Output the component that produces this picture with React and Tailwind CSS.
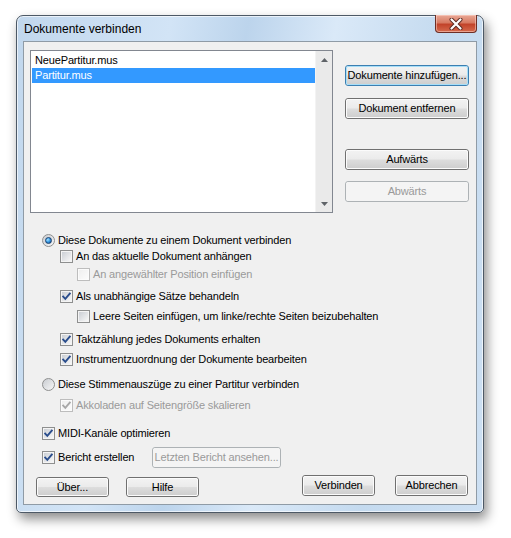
import React from "react";

const BTN = {
  normal: "border-[#707070] text-black",
  focused: "border-[#3c7fb1] text-black",
  disabled: "border-[#adb2b5] text-[#9a9a9a]",
};

const BTN_INNER = {
  normal:
    "border-[#fbfbfb] bg-[linear-gradient(#f2f2f2_0%,#ebebeb_48%,#dddddd_52%,#cfcfcf_100%)]",
  focused:
    "border-[#a6def8] bg-[linear-gradient(#f2f2f2_0%,#ebebeb_48%,#dddddd_52%,#cfcfcf_100%)]",
  disabled: "border-[#f4f4f4] bg-[#f4f4f4]",
};

function Button({ children, variant = "normal", className = "" }) {
  return (
    <div className={`flex rounded-[3px] border ${BTN[variant]} ${className}`}>
      <span
        className={`flex-1 flex items-center justify-center rounded-[2px] border text-[11px] tracking-[-0.15px] whitespace-nowrap ${BTN_INNER[variant]}`}
      >
        {children}
      </span>
    </div>
  );
}

function Check({ checked, disabled }) {
  return (
    <span
      className={`relative block w-[13px] h-[13px] shrink-0 border p-[1px] ${
        disabled ? "border-[#bdbdbd] bg-[#fbfbfb]" : "border-[#8e8f8f] bg-[#f4f4f4]"
      }`}
    >
      <span
        className={`block w-full h-full ${
          disabled
            ? "bg-[linear-gradient(135deg,#efefef,#fbfbfb)]"
            : "bg-[linear-gradient(135deg,#cbcfd5,#f7f7f7)]"
        }`}
      />
      {checked && (
        <svg className="absolute left-0 top-0" width="11" height="11" viewBox="0 0 11 11">
          <path
            d="M2.2 5.6 L4.3 7.9 L8.8 2.6"
            fill="none"
            stroke={disabled ? "#a8a8a8" : "#2a4d8c"}
            strokeWidth="1.9"
            strokeLinecap="square"
          />
        </svg>
      )}
    </span>
  );
}

function Radio({ checked }) {
  return (
    <span className="flex items-center justify-center w-[13px] h-[13px] shrink-0 rounded-full border border-[#8e8f8f] bg-[linear-gradient(135deg,#c9ccd1,#f7f7f7)]">
      {checked && (
        <span className="block w-[7px] h-[7px] rounded-full bg-[radial-gradient(circle_at_35%_35%,#a9e2ff_0%,#3b9ee6_45%,#0b3e86_100%)] border border-[#173f6e]" />
      )}
    </span>
  );
}

function Row({ indent, control, label, disabled, className = "" }) {
  return (
    <div className={`flex items-center h-[16px] ${indent} ${className}`}>
      {control}
      <span
        className={`ml-[3px] text-[11px] tracking-[-0.15px] whitespace-nowrap ${
          disabled ? "text-[#9a9a9a]" : "text-black"
        }`}
      >
        {label}
      </span>
    </div>
  );
}

function Arrow({ up }) {
  return (
    <div className="h-[17px] flex items-center justify-center">
      <svg width="7" height="4" viewBox="0 0 7 4">
        <path d={up ? "M0 4 L3.5 0 L7 4 Z" : "M0 0 L3.5 4 L7 0 Z"} fill="#5f6368" />
      </svg>
    </div>
  );
}

export default function App() {
  return (
    <div className="w-[511px] h-[538px] bg-white pt-[15px] pl-[16px] overflow-hidden font-['Liberation_Sans',Arial,sans-serif]">
      <div className="w-[468px] h-[498px] flex flex-col rounded-t-[7px] rounded-b-[5px] border border-[#4d5966] bg-[linear-gradient(100deg,#c1d7ed_0%,#d2e4f6_28%,#bcd4ec_42%,#dae9f8_58%,#c4daef_78%,#cde0f3_100%)] shadow-[inset_0_0_0_1px_rgba(255,255,255,0.65),3px_6px_12px_rgba(0,0,0,0.45)]">
        {/* title bar */}
        <div className="h-[25px] flex items-start justify-between pl-[7px] pr-[6px]">
          <span className="pt-[5px] text-[12px] leading-[16px] text-black">Dokumente verbinden</span>
          <div className="-mt-[1px] w-[42px] h-[18px] flex items-center justify-center rounded-b-[4px] border border-[#6d2e25] border-t-0 bg-[linear-gradient(#e9a896_0%,#d77a62_45%,#c2432a_55%,#d56a4d_100%)] shadow-[inset_0_0_0_1px_rgba(255,220,210,0.5)]">
            <svg width="14" height="12" viewBox="0 0 14 12">
              <path
                d="M2.5 1.5 L11.5 10.5 M11.5 1.5 L2.5 10.5"
                stroke="#5a2a22"
                strokeWidth="4"
                strokeLinecap="round"
              />
              <path
                d="M2.5 1.5 L11.5 10.5 M11.5 1.5 L2.5 10.5"
                stroke="#ffffff"
                strokeWidth="2.2"
                strokeLinecap="round"
              />
            </svg>
          </div>
        </div>

        {/* client area */}
        <div className="mx-[6px] h-[464px] border border-[#8f9ba6] bg-[#f0f0f0] flex flex-col">
          <div className="flex items-start">
            <div className="ml-[6px] mt-[8px] w-[303px] h-[163px] border border-[#828790] bg-white flex">
              <div className="flex-1 pl-[1px] pt-[2px] text-[11px] tracking-[-0.15px]">
                <div className="h-[15px] leading-[15px] pl-[3px] text-black">NeuePartitur.mus</div>
                <div className="h-[15px] leading-[15px] pl-[3px] text-white bg-[#3399ff]">Partitur.mus</div>
              </div>
              <div className="w-[17px] flex flex-col justify-between bg-[#eaeaea] border-l border-[#f3f3f3]">
                <Arrow up />
                <Arrow />
              </div>
            </div>
            <div className="ml-[12px] mt-[23px] flex flex-col">
              <Button variant="focused" className="w-[124px] h-[21px]">Dokumente hinzufügen...</Button>
              <Button className="w-[124px] h-[21px] mt-[12px]">Dokument entfernen</Button>
              <Button className="w-[124px] h-[21px] mt-[30px]">Aufwärts</Button>
              <Button variant="disabled" className="w-[124px] h-[21px] mt-[11px]">Abwärts</Button>
            </div>
          </div>

          <div className="mt-[19px] flex flex-col">
            <Row indent="pl-[18px]" control={<Radio checked />} label="Diese Dokumente zu einem Dokument verbinden" />
            <Row indent="pl-[36px]" control={<Check />} label="An das aktuelle Dokument anhängen" />
            <Row indent="pl-[53px]" className="mt-[2px]" control={<Check disabled />} label="An angewählter Position einfügen" disabled />
            <Row indent="pl-[36px]" className="mt-[6px]" control={<Check checked />} label="Als unabhängige Sätze behandeln" />
            <Row indent="pl-[53px]" className="mt-[4px]" control={<Check />} label="Leere Seiten einfügen, um linke/rechte Seiten beizubehalten" />
            <Row indent="pl-[36px]" className="mt-[7px]" control={<Check checked />} label="Taktzählung jedes Dokuments erhalten" />
            <Row indent="pl-[36px]" className="mt-[4px]" control={<Check checked />} label="Instrumentzuordnung der Dokumente bearbeiten" />
            <Row indent="pl-[18px]" className="mt-[9px]" control={<Radio />} label="Diese Stimmenauszüge zu einer Partitur verbinden" />
            <Row indent="pl-[36px]" className="mt-[5px]" control={<Check checked disabled />} label="Akkoladen auf Seitengröße skalieren" disabled />
            <Row indent="pl-[18px]" className="mt-[12px]" control={<Check checked />} label="MIDI-Kanäle optimieren" />
            <div className="mt-[6px] h-[21px] flex items-center pl-[18px]">
              <div className="w-[110px] flex items-center">
                <Check checked />
                <span className="ml-[3px] text-[11px] tracking-[-0.15px] text-black whitespace-nowrap">Bericht erstellen</span>
              </div>
              <Button variant="disabled" className="w-[129px] h-[21px]">Letzten Bericht ansehen...</Button>
            </div>
          </div>

          <div className="mt-[7px] flex items-start pl-[12px] pr-[8px]">
            <Button className="mt-[2px] w-[73px] h-[20px]">Über...</Button>
            <Button className="mt-[2px] ml-[17px] w-[73px] h-[20px]">Hilfe</Button>
            <Button className="ml-auto w-[73px] h-[21px]">Verbinden</Button>
            <Button className="ml-[20px] w-[73px] h-[21px]">Abbrechen</Button>
          </div>
        </div>
      </div>
    </div>
  );
}
